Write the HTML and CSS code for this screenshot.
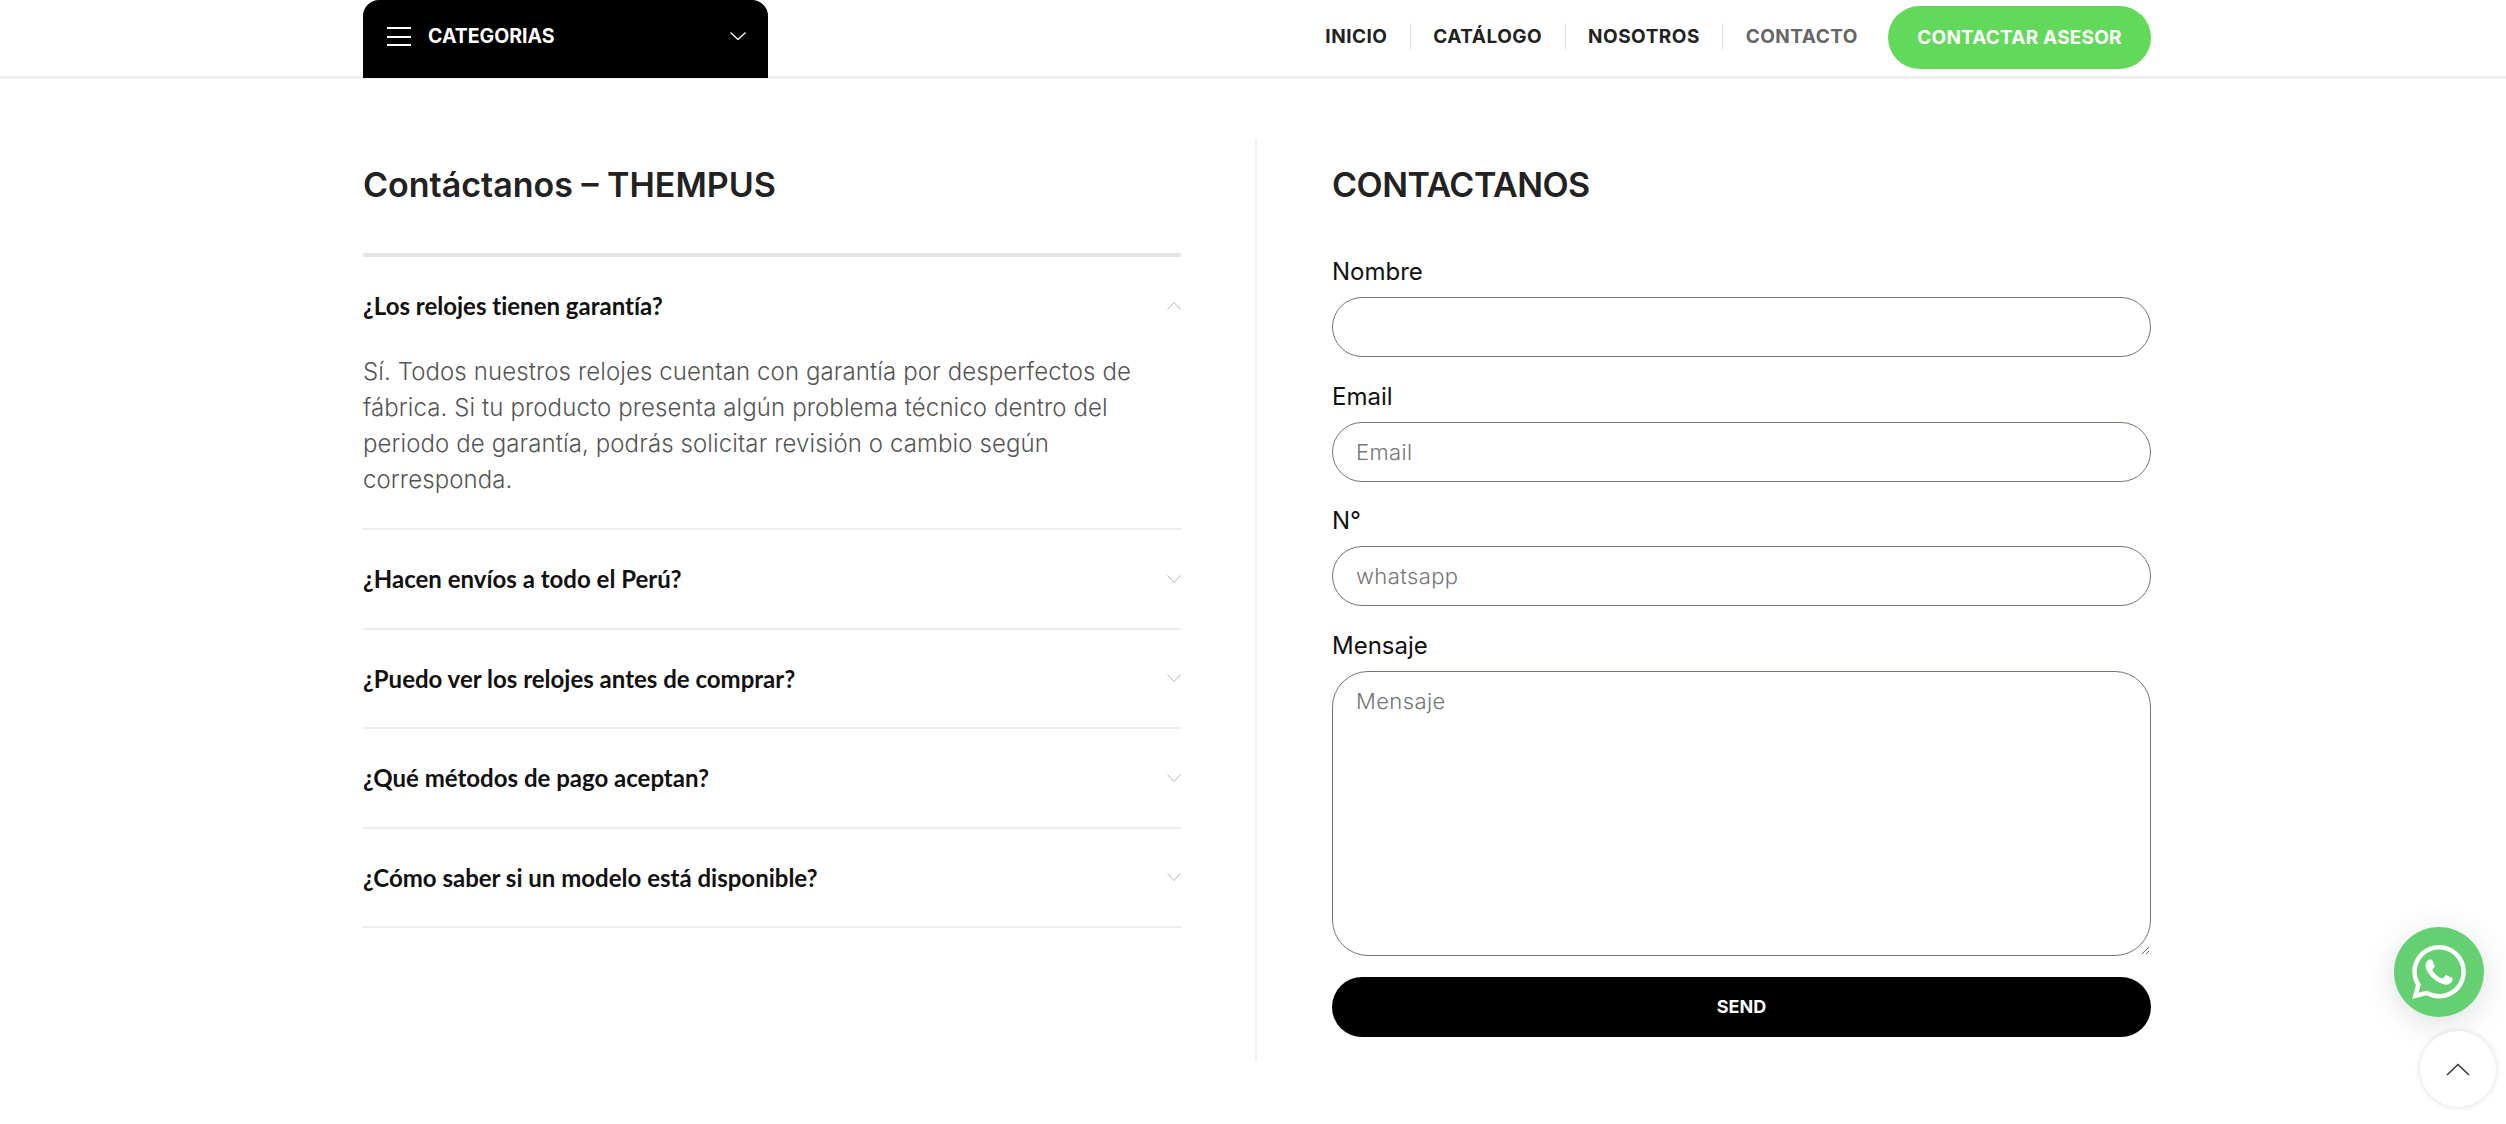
FILE: index.html
```html
<!DOCTYPE html>
<html lang="es">
<head>
    <meta charset="UTF-8">
    <meta name="viewport" content="width=device-width, initial-scale=1.0">
    <title>Contacto - Thempus</title>
    <link rel="stylesheet" href="styles.css">
</head>
<body>
    <header class="site-header">
        <div class="header-inner">
            <div class="categories">
                <span class="burger"><i></i><i></i><i></i></span>
                <span class="categories-label">CATEGORIAS</span>
                <svg class="categories-arrow" viewBox="0 0 16 8" width="16" height="8"><path d="M.5.5 8 7.5 15.500.5" fill="none" stroke="#fff" stroke-width="1.300"/></svg>
            </div>
            <nav class="main-nav">
                <a href="#">INICIO</a>
                <a href="#">CATÁLOGO</a>
                <a href="#">NOSOTROS</a>
                <a href="#" class="current">CONTACTO</a>
            </nav>
            <a href="#" class="advisor-btn">CONTACTAR ASESOR</a>
        </div>
    </header>

    <main class="contact-page">
        <section class="faq-col">
            <h2 class="col-title">Contáctanos – THEMPUS</h2>
            <div class="faq-list">
                <details class="faq-item" open>
                    <summary>¿Los relojes tienen garantía?
                        <svg class="faq-arrow" viewBox="0 0 14 8" width="14" height="8"><path d="M.5.500 7 7.500 13.500.5" fill="none" stroke="#b5b5b5" stroke-width="1"/></svg>
                    </summary>
                    <p>Sí. Todos nuestros relojes cuentan con garantía por desperfectos de fábrica. Si tu producto presenta algún problema técnico dentro del periodo de garantía, podrás solicitar revisión o cambio según corresponda.</p>
                </details>
                <details class="faq-item">
                    <summary>¿Hacen envíos a todo el Perú?
                        <svg class="faq-arrow" viewBox="0 0 14 8" width="14" height="8"><path d="M.5.500 7 7.500 13.500.5" fill="none" stroke="#b5b5b5" stroke-width="1"/></svg>
                    </summary>
                </details>
                <details class="faq-item">
                    <summary>¿Puedo ver los relojes antes de comprar?
                        <svg class="faq-arrow" viewBox="0 0 14 8" width="14" height="8"><path d="M.5.500 7 7.500 13.500.5" fill="none" stroke="#b5b5b5" stroke-width="1"/></svg>
                    </summary>
                </details>
                <details class="faq-item">
                    <summary>¿Qué métodos de pago aceptan?
                        <svg class="faq-arrow" viewBox="0 0 14 8" width="14" height="8"><path d="M.5.500 7 7.500 13.500.5" fill="none" stroke="#b5b5b5" stroke-width="1"/></svg>
                    </summary>
                </details>
                <details class="faq-item">
                    <summary>¿Cómo saber si un modelo está disponible?
                        <svg class="faq-arrow" viewBox="0 0 14 8" width="14" height="8"><path d="M.5.500 7 7.500 13.500.5" fill="none" stroke="#b5b5b5" stroke-width="1"/></svg>
                    </summary>
                </details>
            </div>
        </section>

        <section class="form-col">
            <h2 class="col-title caps">CONTACTANOS</h2>
            <form class="contact-form" action="#" method="post">
                <label for="nombre">Nombre</label>
                <input type="text" id="nombre" name="nombre">

                <label for="email">Email</label>
                <input type="email" id="email" name="email" placeholder="Email">

                <label for="whatsapp">N°</label>
                <input type="tel" id="whatsapp" name="whatsapp" placeholder="whatsapp">

                <label for="mensaje">Mensaje</label>
                <textarea id="mensaje" name="mensaje" placeholder="Mensaje"></textarea>

                <button type="submit">SEND</button>
            </form>
        </section>
    </main>

    <a href="#" class="whatsapp-float" aria-label="WhatsApp">
        <svg viewBox="0 0 24 24" width="54" height="54"><path fill="#fff" d="M17.472 14.382c-.297-.149-1.758-.867-2.03-.967-.273-.099-.471-.148-.67.15-.197.297-.767.966-.94 1.164-.173.199-.347.223-.644.075-.297-.15-1.255-.463-2.39-1.475-.883-.788-1.48-1.761-1.653-2.059-.173-.297-.018-.458.13-.606.134-.133.298-.347.446-.52.149-.174.198-.298.298-.497.099-.198.05-.371-.025-.52-.075-.149-.669-1.612-.916-2.207-.242-.579-.487-.5-.669-.51-.173-.008-.371-.01-.57-.01-.198 0-.52.074-.792.372-.272.297-1.04 1.016-1.04 2.479 0 1.462 1.065 2.875 1.213 3.074.149.198 2.096 3.2 5.077 4.487.709.306 1.262.489 1.694.625.712.227 1.36.195 1.871.118.571-.085 1.758-.719 2.006-1.413.248-.694.248-1.289.173-1.413-.074-.124-.272-.198-.57-.347m-5.421 7.403h-.004a9.87 9.87 0 01-5.031-1.378l-.361-.214-3.741.982.998-3.648-.235-.374a9.86 9.86 0 01-1.51-5.26c.001-5.45 4.436-9.884 9.888-9.884 2.64 0 5.122 1.03 6.988 2.898a9.825 9.825 0 012.893 6.994c-.003 5.45-4.437 9.884-9.885 9.884m8.413-18.297A11.815 11.815 0 0012.05 0C5.495 0 .16 5.335.157 11.892c0 2.096.547 4.142 1.588 5.945L.057 24l6.305-1.654a11.882 11.882 0 005.683 1.448h.005c6.554 0 11.89-5.335 11.893-11.893a11.821 11.821 0 00-3.48-8.413Z"/></svg>
    </a>
    <a href="#" class="scroll-top" aria-label="Subir">
        <svg viewBox="0 0 24 13" width="24" height="13"><path d="M1 12 12 1.500 23 12" fill="none" stroke="#333" stroke-width="1.500"/></svg>
    </a>
</body>
</html>
```
FILE: styles.css
```css
* {
    box-sizing: border-box;
}

body {
    font-family: 'Inter', 'Open Sans', sans-serif;
    margin: 0;
    padding: 0;
    background-color: #fff;
    color: #222;
    overflow: hidden;
}

a {
    text-decoration: none;
}

/* header */
.site-header {
    height: 79px;
    border-bottom: 3px solid #f0f0f0;
}

.header-inner {
    width: 1788px;
    margin: 0 0 0 363px;
    display: flex;
    align-items: flex-start;
}

.categories {
    width: 405px;
    height: 78px;
    padding: 27px 22px 0 24px;
    background-color: #000;
    border-radius: 16px 16px 0 0;
    color: #fff;
    display: flex;
    align-items: flex-start;
}

.burger {
    width: 24px;
    height: 19px;
    margin-right: 17px;
    display: flex;
    flex-direction: column;
    justify-content: space-between;
}

.burger i {
    display: block;
    height: 2px;
    background-color: #fff;
}

.categories-label {
    font-size: 19.500px;
    line-height: 19px;
    font-weight: 700;
}

.categories-arrow {
    margin-left: auto;
    margin-top: 5px;
}

.main-nav {
    margin-left: auto;
    height: 72px;
    display: flex;
    align-items: center;
}

.main-nav a {
    font-size: 19px;
    line-height: 27px;
    font-weight: 700;
    letter-spacing: 0.5px;
    color: #222;
    padding: 0 22.400px;
    border-right: 1px solid #e4e4e4;
}

.main-nav a.current {
    color: #666;
    border-right: none;
    padding-right: 30px;
}

.advisor-btn {
    width: 263px;
    height: 63px;
    margin-top: 6px;
    background-color: #62d95a;
    border-radius: 32px;
    color: #fff;
    font-size: 19px;
    font-weight: 700;
    letter-spacing: 0.2px;
    display: flex;
    align-items: center;
    justify-content: center;
}

/* content */
.contact-page {
    width: 1788px;
    margin: 61px 0 0 363px;
    display: grid;
    grid-template-columns: 1fr 1fr;
}

.faq-col {
    padding-right: 74px;
    border-right: 2px solid #f0f0f0;
    height: 920px;
}

.form-col {
    padding-left: 75px;
}

.col-title {
    margin: 0;
    height: 90px;
    padding-top: 24px;
    font-size: 34px;
    line-height: 42px;
    font-weight: 600;
    color: #222;
}

.col-title.caps {
    letter-spacing: -0.5px;
}

.faq-list {
    margin-top: 23px;
    border-top: 4px solid #e5e5e5;
}

.faq-item {
    border-bottom: 2px solid #eee;
}

.faq-item summary {
    height: 97.500px;
    list-style: none;
    font-family: 'Lato', sans-serif;
    font-size: 24px;
    font-weight: 700;
    font-variant-ligatures: none;
    color: #111;
    display: flex;
    align-items: center;
    justify-content: space-between;
    cursor: pointer;
}

.faq-item[open] summary {
    height: 97px;
}

.faq-item summary::-webkit-details-marker {
    display: none;
}

.faq-item[open] .faq-arrow {
    transform: rotate(180deg);
}

.faq-item p {
    margin: 0;
    padding-bottom: 30px;
    font-size: 24px;
    line-height: 36px;
    font-weight: 300;
    letter-spacing: 0.1px;
    color: #555;
}

/* form */
.contact-form {
    margin-top: 30px;
    display: flex;
    flex-direction: column;
}

.contact-form label {
    font-size: 24px;
    line-height: 24px;
    height: 37px;
    color: #111;
}

.contact-form input,
.contact-form textarea {
    width: 100%;
    height: 60px;
    padding: 0 23px;
    border: 1px solid #70747f;
    border-radius: 30px;
    background-color: #fff;
    font-family: inherit;
    font-size: 22px;
    font-weight: 300;
    letter-spacing: 0.4px;
    color: #222;
    outline: none;
}

.contact-form input {
    margin-bottom: 27.500px;
}

.contact-form input::placeholder,
.contact-form textarea::placeholder {
    color: #757575;
}

.contact-form textarea {
    height: 285px;
    padding-top: 16px;
    border-radius: 36px;
}

.contact-form button {
    height: 60px;
    margin-top: 21px;
    background-color: #000;
    border: none;
    border-radius: 30px;
    color: #fff;
    font-family: inherit;
    font-size: 18px;
    font-weight: 700;
    cursor: pointer;
}

/* floating buttons */
.whatsapp-float {
    position: fixed;
    left: 2394px;
    top: 927px;
    width: 90px;
    height: 90px;
    border-radius: 50%;
    background-color: #65d072;
    box-shadow: 0 6px 30px rgba(60, 80, 80, 0.18);
    display: flex;
    align-items: center;
    justify-content: center;
}

.scroll-top {
    position: fixed;
    left: 2420px;
    top: 1031px;
    width: 76px;
    height: 76px;
    border-radius: 50%;
    background-color: #fff;
    box-shadow: 0 0 6px rgba(0, 0, 0, 0.15);
    display: flex;
    align-items: center;
    justify-content: center;
}
```
